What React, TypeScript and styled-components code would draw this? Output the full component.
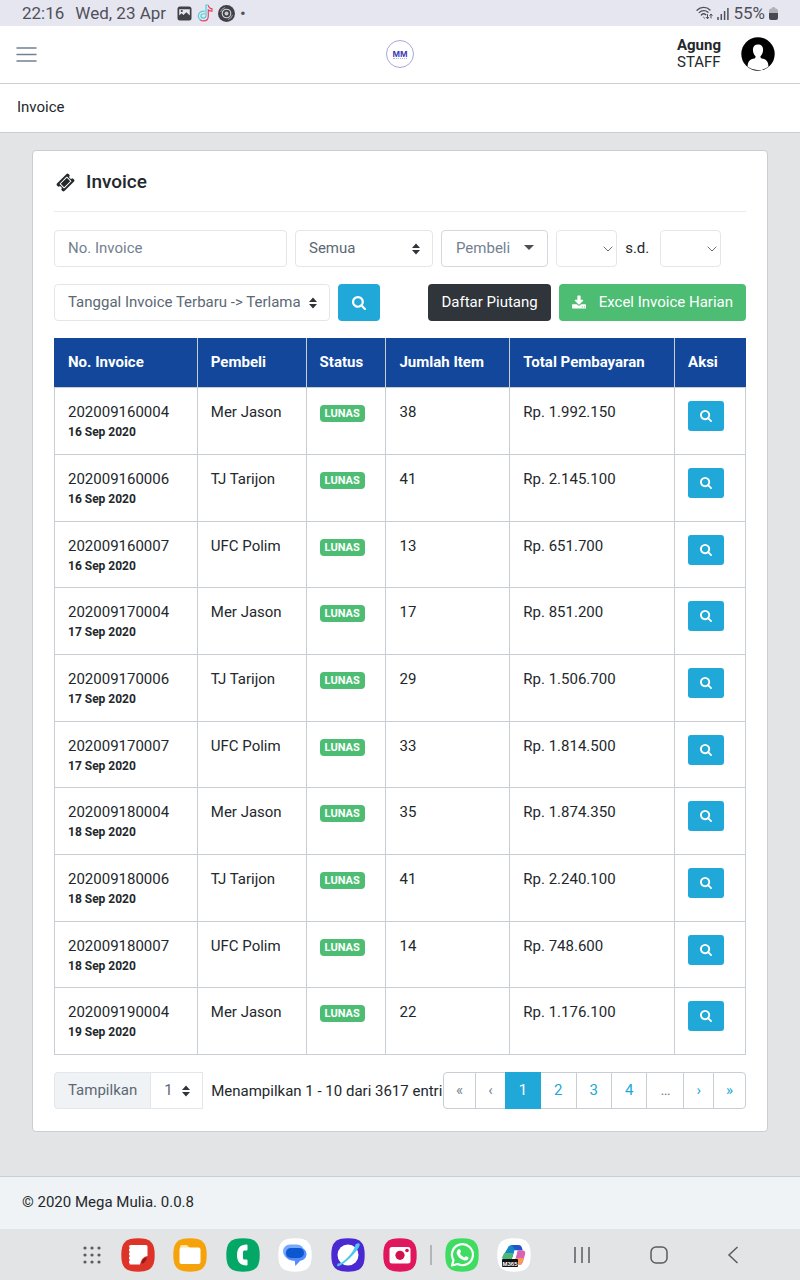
import React from "react";
import styled, { createGlobalStyle } from "styled-components";

const GlobalStyle = createGlobalStyle`
  *, *::before, *::after { box-sizing: border-box; }
  body {
    margin: 0;
    background: #e3e4e6;
    color: #23282c;
    font-family: Roboto, "Liberation Sans", sans-serif;
    font-size: 15px;
    line-height: 22px;
  }
  button, input, select { font: inherit; margin: 0; }
  a { text-decoration: none; }
`;

/* ---------- layout ---------- */

const Page = styled.div`
  display: flex;
  flex-direction: column;
  min-height: 100vh;
`;

const StatusBar = styled.div`
  display: flex;
  align-items: center;
  justify-content: space-between;
  height: 26px;
  padding: 0 22px;
  background: #e6e6f1;
  color: #505058;
  font-size: 17px;
`;

const StatusGroup = styled.div<{ $gap: number }>`
  display: flex;
  align-items: center;
  gap: ${(p) => p.$gap}px;
`;

const Navbar = styled.header`
  display: grid;
  grid-template-columns: 1fr auto 1fr;
  align-items: center;
  height: 58px;
  padding: 0 25px 1px 16px;
  background: #fff;
  border-bottom: 1px solid #c8ced3;
`;

const MenuButton = styled.button`
  display: flex;
  justify-self: start;
  padding: 0;
  border: 0;
  background: none;
  color: #73818f;
`;

const Logo = styled.a`
  display: flex;
  flex-direction: column;
  align-items: center;
  justify-content: center;
  width: 28px;
  height: 28px;
  margin-left: 9px;
  border: 1px solid #a9a5dc;
  border-radius: 50%;
  color: #3a35b5;
  font: bold 9px/8px "Liberation Sans", sans-serif;

  &::after {
    content: "";
    width: 14px;
    border-top: 1px dotted #b5b2e2;
  }
`;

const User = styled.div`
  display: flex;
  align-items: center;
  justify-self: end;
  gap: 20px;
  line-height: 17px;
`;

const UserText = styled.div`
  display: flex;
  flex-direction: column;
`;

const Breadcrumb = styled.nav`
  display: flex;
  align-items: center;
  height: 49px;
  padding: 0 17px 2px;
  background: #fff;
  border-bottom: 1px solid #c8ced3;
`;

const Main = styled.main`
  flex: 1;
  padding: 17px 32px 44px;
`;

const Card = styled.section`
  padding: 19px 21px 22px;
  background: #fff;
  border: 1px solid #c8ced3;
  border-radius: 4px;
`;

const CardTitle = styled.h1`
  display: flex;
  align-items: center;
  gap: 11px;
  margin: 0 0 18px;
  padding: 0 2px 17px;
  border-bottom: 1px solid #e9ebed;
  font-size: 19px;
  font-weight: 500;
  line-height: 24px;
`;

const Toolbar = styled.div`
  display: flex;
  flex-wrap: wrap;
  align-items: center;
  gap: 8px;
  margin-bottom: 17px;
`;

const ToolbarEnd = styled.div`
  display: flex;
  gap: 8px;
  margin-left: auto;
`;

const RangeLabel = styled.span`
  padding: 0 3px 2px 0;
`;

/* ---------- controls ---------- */

const TextInput = styled.input`
  flex: 0 1 233px;
  min-width: 120px;
  height: 37px;
  padding: 0 13px 2px;
  border: 1px solid #e4e7ea;
  border-radius: 4px;
  background: #fff;
  color: #5c6873;
  &::placeholder { color: #73818f; opacity: 1; }
`;

const SelectWrap = styled.span<{ $width: number }>`
  position: relative;
  display: inline-flex;
  flex-shrink: 0;
  width: ${(p) => p.$width}px;
`;

const SelectBox = styled.select<{ $joined?: boolean }>`
  appearance: none;
  width: 100%;
  height: 37px;
  padding: 0 13px 2px;
  border: 1px solid #e4e7ea;
  border-radius: ${(p) => (p.$joined ? "0" : "4px")};
  background: #fff;
  color: #5c6873;
`;

const SelectMark = styled.span<{ $right: number }>`
  position: absolute;
  top: 0;
  right: ${(p) => p.$right}px;
  display: flex;
  align-items: center;
  height: 100%;
  color: #2f353a;
  pointer-events: none;
`;

const Button = styled.button<{ $tone: "info" | "dark" | "success" }>`
  display: inline-flex;
  align-items: center;
  justify-content: center;
  gap: 13px;
  height: 37px;
  padding: 0 13px 2px;
  border: 0;
  border-radius: 4px;
  color: #fff;
  white-space: nowrap;
  background: ${(p) => ({ info: "#20a8d8", dark: "#2f353a", success: "#4dbd74" })[p.$tone]};
`;

const SearchButton = styled(Button)`
  width: 42px;
  padding: 0;
`;

const SmallButton = styled(Button)`
  width: 36px;
  height: 30px;
  padding: 0;
  border-radius: 3px;
`;

const DropButton = styled.button`
  display: inline-flex;
  align-items: center;
  gap: 14px;
  height: 37px;
  padding: 0 13px 2px 14px;
  border: 1px solid #d5d9dd;
  border-radius: 4px;
  background: #fff;
  color: #73818f;
`;

/* ---------- table ---------- */

const Table = styled.table`
  width: 100%;
  border-collapse: collapse;
  margin-bottom: 17px;
`;

const Col = styled.col<{ $width: number }>`
  width: ${(p) => p.$width}px;
`;

const HeadCell = styled.th`
  height: 49px;
  padding: 0 13px 2px;
  background: #12479b;
  border: 1px solid #c8ced3;
  border-top-color: #12479b;
  color: #fff;
  font-weight: 700;
  text-align: left;
  white-space: nowrap;
  &:first-child { border-left-color: #12479b; }
  &:last-child { border-right-color: #12479b; }
`;

/* Three rows add up to 200px. */
const BodyRow = styled.tr`
  height: 67px;
  &:nth-child(3n) { height: 66px; }
`;

const Cell = styled.td`
  padding: 13px 13px 0;
  border: 1px solid #c8ced3;
  vertical-align: top;
  white-space: nowrap;
`;

const InvoiceDate = styled.strong`
  display: block;
  font-size: 12px;
  line-height: 18px;
`;

const Badge = styled.span`
  display: inline-block;
  padding: 0 5px;
  border-radius: 4px;
  background: #4dbd74;
  color: #fff;
  font-size: 11px;
  font-weight: 700;
  line-height: 17px;
`;

/* ---------- table footer ---------- */

const TableFooter = styled.div`
  display: flex;
  align-items: center;
`;

const PageSizeLabel = styled.label`
  height: 37px;
  padding: 0 13px;
  border: 1px solid #e4e7ea;
  border-right: 0;
  border-radius: 4px 0 0 4px;
  background: #f0f3f5;
  color: #5c6873;
  line-height: 35px;
`;

const Summary = styled.span`
  margin-left: 8px;
  white-space: nowrap;
`;

const Pages = styled.ul`
  display: flex;
  margin: 0 0 0 auto;
  padding: 0;
  list-style: none;
`;

const PageItem = styled.li`
  & + & { margin-left: -1px; }
  &:first-child > a { border-radius: 4px 0 0 4px; }
  &:last-child > a { border-radius: 0 4px 4px 0; }
`;

const PageLink = styled.a<{ $state?: "active" | "muted"; $arrow: boolean }>`
  position: relative;
  z-index: ${(p) => (p.$state === "active" ? 1 : 0)};
  display: block;
  height: 37px;
  padding: 0 ${(p) => (p.$arrow ? 12 : 13)}px;
  border: 1px solid ${(p) => (p.$state === "active" ? "#20a8d8" : "#c8ced3")};
  background: ${(p) => (p.$state === "active" ? "#20a8d8" : "#fff")};
  color: ${(p) => (p.$state === "active" ? "#fff" : p.$state === "muted" ? "#73818f" : "#20a8d8")};
  line-height: 35px;
`;

const PageFooter = styled.footer`
  height: 53px;
  padding: 0 22px;
  background: #f0f3f5;
  border-top: 1px solid #c8ced3;
  line-height: 51px;
`;

/* ---------- device task bar ---------- */

const TaskBar = styled.div`
  display: flex;
  align-items: center;
  height: 51px;
  padding: 0 61px 0 83px;
  background: #e3e4e6;
`;

const AppRow = styled.div<{ $basis: number; $left: number }>`
  display: flex;
  flex: 0 0 ${(p) => p.$basis}px;
  justify-content: space-between;
  margin-left: ${(p) => p.$left}px;
`;

const TaskDivider = styled.div`
  width: 2px;
  height: 20px;
  margin-left: 13px;
  background: #b4b5b9;
`;

const NavKeys = styled.div`
  display: flex;
  flex: 1;
  justify-content: space-between;
  margin-left: 42px;
`;

const BareButton = styled.button`
  display: flex;
  padding: 0;
  border: 0;
  background: none;
`;

/* ---------- icons ---------- */

const SearchIcon = ({ size }: { size: number }) => (
  <svg width={size} height={size} viewBox="0 0 1664 1664" fill="currentColor" aria-hidden="true">
    <path d="M1152 704q0-185-131.500-316.500T704 256 387.500 387.500 256 704t131.500 316.500T704 1152t316.500-131.500T1152 704zm512 832q0 52-38 90t-90 38q-54 0-90-38l-343-342q-179 124-399 124-143 0-273.500-55.500t-225-150-150-225T0 704t55.500-273.500 150-225 225-150T704 0t273.500 55.500 225 150 150 225T1408 704q0 220-124 399l343 343q37 37 37 90z" />
  </svg>
);

const DownloadIcon = () => (
  <svg width="14" height="14" viewBox="0 0 1664 1536" fill="currentColor" aria-hidden="true">
    <path d="M1280 1344q0-26-19-45t-45-19-45 19-19 45 19 45 45 19 45-19 19-45zm256 0q0-26-19-45t-45-19-45 19-19 45 19 45 45 19 45-19 19-45zm128-224v320q0 40-28 68t-68 28H96q-40 0-68-28t-28-68v-320q0-40 28-68t68-28h465l135 136q58 56 136 56t136-56l136-136h464q40 0 68 28t28 68zm-325-569q17 41-14 70l-448 448q-18 19-45 19t-45-19L339 621q-31-29-14-70 17-39 59-39h256V64q0-26 19-45t45-19h256q26 0 45 19t19 45v448h256q42 0 59 39z" />
  </svg>
);

const TicketIcon = () => (
  <svg width="19" height="19" viewBox="0 0 1792 1792" fill="currentColor" aria-hidden="true">
    <path d="M1024 452l316 316-572 572-316-316zm-211 979l618-618q19-19 19-45t-19-45l-362-362q-18-18-45-18t-45 18l-618 618q-19 19-19 45t19 45l362 362q18 18 45 18t45-18zm889-637l-907 908q-37 37-90.500 37t-90.500-37l-126-126q56-56 56-136t-56-136-136-56-136 56l-125-126q-37-37-37-90.500t37-90.500l907-906q37-37 90.500-37t90.500 37l125 125q-56 56-56 136t56 136 136 56 136-56l126 125q37 37 37 90.500t-37 90.500z" />
  </svg>
);

const SortMark = () => (
  <svg width="8" height="12" viewBox="0 0 8 12" fill="currentColor" aria-hidden="true">
    <path d="M4 0.500L8 5H0zM4 11.500L0 7h8z" />
  </svg>
);

const ChevronMark = () => (
  <svg width="10" height="6" viewBox="0 0 10 6" fill="none" stroke="#6b7075" aria-hidden="true">
    <path d="M0.700 0.700L5 5l4.300-4.300" />
  </svg>
);

const CaretMark = () => (
  <svg width="10" height="5" viewBox="0 0 10 5" fill="#4a5056" aria-hidden="true">
    <path d="M0 0h10L5 5z" />
  </svg>
);

const MenuIcon = () => (
  <svg width="21" height="17" viewBox="0 0 21 17" fill="none" stroke="currentColor" strokeWidth="1.500" strokeLinecap="round">
    <path d="M1 2h19M1 8.500h19M1 15h19" />
  </svg>
);

const Avatar = () => (
  <svg width="34" height="34" viewBox="0 0 34 34" role="img" aria-label="Agung">
    <circle cx="17" cy="17" r="16.700" fill="#000" />
    <path
      fill="#fff"
      d="M17 7.500c3.200 0 5.200 2 5.100 5.300-.1 2.700-1 5-2.600 6.500-.2 1 .2 1.900 1.200 2.200 3.300.6 5.600 2 6.300 4.700.4 1.300.4 2.600.4 3.600A16 16 0 0 1 17 33a16 16 0 0 1-10.400-3.200c0-1 0-2.300.4-3.600.7-2.700 3-4.100 6.300-4.700 1-.3 1.400-1.200 1.200-2.200-1.600-1.500-2.500-3.800-2.600-6.500-.1-3.300 1.900-5.300 5.100-5.300z"
    />
  </svg>
);

const GalleryIcon = () => (
  <svg width="15" height="15" viewBox="0 0 15 15">
    <rect x="0.500" y="0.500" width="14" height="14" rx="2.500" fill="#414147" />
    <path d="M2.200 5.500v-2.300h10.600v6.200L9.300 6.200 6.500 9 4.500 7.300 2.200 9.600z" fill="#e6e6f1" />
    <circle cx="4.800" cy="5" r="1.100" fill="#414147" />
  </svg>
);

const NoteIcon = () => (
  <svg width="16" height="18" viewBox="0 0 16 18" fill="none" strokeWidth="1.200" strokeLinecap="round">
    <path d="M11.300 1.500c.4 2 1.700 3.100 3.700 3.300v2.400c-1.500 0-2.700-.4-3.700-1.200v6c0 3.200-2.200 4.900-4.800 4.900-1.300 0-2.300-.4-3.100-1" stroke="#e8405f" />
    <path d="M7.300 7.100C3.800 6.900 1.300 9 1.300 12c0 1.500.6 2.700 1.700 3.600M9 11.800V1h2.200M7.300 9.800c-2-.3-3.300.8-3.300 2.200 0 2.600 4.500 3 5-.2" stroke="#4fcfd6" />
  </svg>
);

const DiscIcon = () => (
  <svg width="17" height="17" viewBox="0 0 17 17">
    <circle cx="8.500" cy="8.500" r="8.500" fill="#414147" />
    <circle cx="8.500" cy="8.500" r="4.300" fill="none" stroke="#d5d5dd" strokeWidth="1.100" />
    <circle cx="8.500" cy="8.500" r="2" fill="#c9c9d1" />
    <path d="M2.500 7A6.300 6.300 0 0 1 7 2.500M14.500 10A6.300 6.300 0 0 1 10 14.500" stroke="#9b9ba3" fill="none" />
  </svg>
);

const WifiIcon = () => (
  <svg width="17" height="14" viewBox="0 0 17 14" fill="none" stroke="#505058" strokeWidth="1.300" strokeLinecap="round">
    <path d="M1 4.200C4.600.5 10.500.3 14 4M3.200 6.600c2.500-2.500 6.300-2.600 8.800-.3M5.300 9c1.300-1.300 3.300-1.400 4.600-.3" />
    <path d="M7.600 11.300l1 1M11.500 8.500v4M10.200 11.300l1.300 1.500 1.200-1.500M15 12V8.300M13.900 9.400L15 8l1.200 1.400" strokeWidth="1" />
  </svg>
);

const SignalIcon = () => (
  <svg width="12" height="13" viewBox="0 0 12 13" stroke="#505058" strokeWidth="1.500">
    <path d="M1 13v-3M4.300 13V7M7.600 13V4M10.900 13V1" />
  </svg>
);

const BatteryIcon = () => (
  <svg width="9" height="13" viewBox="0 0 9 13">
    <path d="M2.500 1.500Q2.500 0 4.500 0t2 1.500Q9 1.500 9 4v3H0V4q0-2.500 2.500-2.500z" fill="#b1b1ba" />
    <path d="M0 6h9v5q0 2-2 2H2q-2 0-2-2z" fill="#48484f" />
  </svg>
);

const AppIcon = ({ label, fill, children }: { label: string; fill: string; children: React.ReactNode }) => (
  <BareButton aria-label={label}>
    <svg width="34" height="34" viewBox="0 0 34 34">
      <path d="M17 0.300C29.500.3 33.700 4.500 33.700 17S29.500 33.700 17 33.700.3 29.500.3 17 4.500.3 17 .3z" fill={fill} />
      {children}
    </svg>
  </BareButton>
);

const GridIcon = () => (
  <svg width="18" height="18" viewBox="0 0 18 18" fill="#5b5b61">
    {[2, 9, 16].map((y) => [2, 9, 16].map((x) => <circle key={`${x}-${y}`} cx={x} cy={y} r="1.600" />))}
  </svg>
);

/* ---------- data ---------- */

const buyers = ["Mer Jason", "TJ Tarijon", "UFC Polim"];

const invoices = [
  ["202009160004", "16 Sep 2020", 0, 38, "1.992.150"],
  ["202009160006", "16 Sep 2020", 1, 41, "2.145.100"],
  ["202009160007", "16 Sep 2020", 2, 13, "651.700"],
  ["202009170004", "17 Sep 2020", 0, 17, "851.200"],
  ["202009170006", "17 Sep 2020", 1, 29, "1.506.700"],
  ["202009170007", "17 Sep 2020", 2, 33, "1.814.500"],
  ["202009180004", "18 Sep 2020", 0, 35, "1.874.350"],
  ["202009180006", "18 Sep 2020", 1, 41, "2.240.100"],
  ["202009180007", "18 Sep 2020", 2, 14, "748.600"],
  ["202009190004", "19 Sep 2020", 0, 22, "1.176.100"],
] as const;

const columns = [
  { title: "No. Invoice", width: 143 },
  { title: "Pembeli", width: 109 },
  { title: "Status", width: 80 },
  { title: "Jumlah Item", width: 124 },
  { title: "Total Pembayaran", width: 165 },
  { title: "Aksi", width: 71 },
];

const pages: { text: string; state?: "active" | "muted" }[] = [
  { text: "«", state: "muted" },
  { text: "‹", state: "muted" },
  { text: "1", state: "active" },
  { text: "2" },
  { text: "3" },
  { text: "4" },
  { text: "…", state: "muted" },
  { text: "›" },
  { text: "»" },
];

type SelectProps = { label?: string; id?: string; width: number; option?: string; date?: boolean; joined?: boolean };

const Select = ({ label, id, width, option = "", date, joined }: SelectProps) => (
  <SelectWrap $width={width}>
    <SelectBox id={id} aria-label={label} $joined={joined}>
      <option>{option}</option>
    </SelectBox>
    <SelectMark $right={date ? 4 : 13}>{date ? <ChevronMark /> : <SortMark />}</SelectMark>
  </SelectWrap>
);

export default function App() {
  return (
    <Page>
      <GlobalStyle />
      <StatusBar>
        <StatusGroup $gap={11}>
          <span>22:16</span>
          <span>Wed, 23 Apr</span>
          <StatusGroup $gap={5}>
            <GalleryIcon />
            <NoteIcon />
            <DiscIcon />
            <span>•</span>
          </StatusGroup>
        </StatusGroup>
        <StatusGroup $gap={4}>
          <WifiIcon />
          <SignalIcon />
          <span>55%</span>
          <BatteryIcon />
        </StatusGroup>
      </StatusBar>

      <Navbar>
        <MenuButton aria-label="Menu">
          <MenuIcon />
        </MenuButton>
        <Logo href="#">MM</Logo>
        <User>
          <UserText>
            <strong>Agung</strong>
            <span>STAFF</span>
          </UserText>
          <Avatar />
        </User>
      </Navbar>
      <Breadcrumb>Invoice</Breadcrumb>

      <Main>
        <Card>
          <CardTitle>
            <TicketIcon />
            Invoice
          </CardTitle>

          <Toolbar>
            <TextInput aria-label="No. Invoice" placeholder="No. Invoice" />
            <Select label="Status" width={138} option="Semua" />
            <DropButton>
              Pembeli
              <CaretMark />
            </DropButton>
            <Select label="Dari tanggal" width={61} date />
            <RangeLabel>s.d.</RangeLabel>
            <Select label="Sampai tanggal" width={61} date />
          </Toolbar>
          <Toolbar>
            <Select label="Urutan" width={276} option="Tanggal Invoice Terbaru -> Terlama" />
            <SearchButton $tone="info" aria-label="Cari">
              <SearchIcon size={14} />
            </SearchButton>
            <ToolbarEnd>
              <Button $tone="dark">Daftar Piutang</Button>
              <Button $tone="success">
                <DownloadIcon />
                Excel Invoice Harian
              </Button>
            </ToolbarEnd>
          </Toolbar>

          <Table>
            <colgroup>
              {columns.map((c) => (
                <Col key={c.title} $width={c.width} />
              ))}
            </colgroup>
            <thead>
              <tr>
                {columns.map((c) => (
                  <HeadCell key={c.title} scope="col">
                    {c.title}
                  </HeadCell>
                ))}
              </tr>
            </thead>
            <tbody>
              {invoices.map(([no, date, buyer, items, total]) => (
                <BodyRow key={no}>
                  <Cell>
                    {no}
                    <InvoiceDate>{date}</InvoiceDate>
                  </Cell>
                  <Cell>{buyers[buyer]}</Cell>
                  <Cell>
                    <Badge>LUNAS</Badge>
                  </Cell>
                  <Cell>{items}</Cell>
                  <Cell>Rp. {total}</Cell>
                  <Cell>
                    <SmallButton $tone="info" aria-label={`Lihat ${no}`}>
                      <SearchIcon size={12} />
                    </SmallButton>
                  </Cell>
                </BodyRow>
              ))}
            </tbody>
          </Table>

          <TableFooter>
            <PageSizeLabel htmlFor="page-size">Tampilkan</PageSizeLabel>
            <Select id="page-size" width={53} option="1" joined />
            <Summary>Menampilkan 1 - 10 dari 3617 entri</Summary>
            <Pages>
              {pages.map((p) => (
                <PageItem key={p.text}>
                  <PageLink href="#" $state={p.state} $arrow={"«‹›»".includes(p.text)}>
                    {p.text}
                  </PageLink>
                </PageItem>
              ))}
            </Pages>
          </TableFooter>
        </Card>
      </Main>

      <PageFooter>© 2020 Mega Mulia. 0.0.8</PageFooter>

      <TaskBar>
        <BareButton aria-label="Apps">
          <GridIcon />
        </BareButton>
        <AppRow $basis={296} $left={20}>
          <AppIcon label="Notes" fill="#dd3328">
            <path d="M8 8.500Q8 7 9.500 7H25q1.500 0 1.500 1.500V18q-6 .5-7.500 8.500H9.500Q8 26.500 8 25z" fill="#fff" />
            <path d="M26 19.500c-.6 3-2.500 5.500-5.500 6.500.3-4 2-6.200 5.500-6.500z" fill="#8c1d16" />
            <path d="M7.500 9v17" stroke="#dd3328" strokeWidth="2" strokeDasharray="2 2" />
          </AppIcon>
          <AppIcon label="Files" fill="#f6a20a">
            <path d="M7 9q0-2 2-2h5l3 3H7z" fill="#ffe3a0" />
            <rect x="6.500" y="9.500" width="21" height="16.500" rx="2" fill="#fff" />
          </AppIcon>
          <AppIcon label="Phone" fill="#04a866">
            <path d="M21.500 7.200v4.300q0 .9-.9.900h-2.300q-1.300 0-1.300 1.500v6.200q0 1.500 1.300 1.500h2.300q.9 0 .9.900v4.300q0 .8-.9.800c-6.300-.2-9.600-3.600-9.600-10.600s3.300-10.400 9.600-10.600q.9 0 .9.800z" fill="#fff" />
          </AppIcon>
          <AppIcon label="Messages" fill="#fff">
            <rect x="5" y="6.500" width="21" height="14" rx="7" fill="#78a9ff" />
            <path d="M13 10h9c3.800 0 6.500 2.600 6.500 6 0 3.600-2.700 6.500-6.300 6.700L17.300 28l-.5-5.200c-4.500 0-8.500-1.800-9.300-5.300C6.800 13 9 10 13 10z" fill="#558bfa" />
            <rect x="8" y="10" width="18" height="10" rx="5" fill="#0b57d0" />
          </AppIcon>
          <AppIcon label="Internet" fill="#4a28d2">
            <circle cx="17" cy="17" r="10.500" fill="#fff" />
            <path d="M24.500 6.200c3-1.600 5-1 4 1.600C26.500 13.600 13 27 7.500 28.300c-2 .5-1.500-1.500-.5-3 1.500.5 4-.7 7.500-3.800 4.800-4.300 9.300-10.300 10-15.300z" fill="#4cc7ee" />
          </AppIcon>
          <AppIcon label="Camera" fill="#e0175c">
            <rect x="6.500" y="9" width="21" height="16.500" rx="2.500" fill="#fff" />
            <circle cx="17" cy="17.300" r="4.600" fill="#d3104f" />
            <circle cx="24" cy="12.500" r="1.800" fill="#d3104f" />
          </AppIcon>
        </AppRow>
        <TaskDivider />
        <AppRow $basis={86} $left={13}>
          <AppIcon label="WhatsApp" fill="#3fdc62">
            <path d="M7 27.500l1.500-5.300A10.500 10.500 0 1 1 12.600 26z" fill="none" stroke="#fff" strokeWidth="2.200" strokeLinejoin="round" />
            <path d="M13.600 11.200c.6-.4 1.300-.3 1.500.3l.9 2.100c.2.500-1.100 1.600-1 2 .9 1.800 2.300 3 4.100 3.800.5.200 1.400-1.400 1.900-1.200l2.300 1.100c.5.300.1 1.700-.5 2.300-1 1-2.500 1.200-4 .7-3.200-1.100-5.700-3.400-6.800-6.100-.8-1.900-.1-4 1.600-5z" fill="#fff" />
          </AppIcon>
          <AppIcon label="Copilot" fill="#fff">
            <path d="M11 9.500Q12 7 14.500 7H22q-3 .7-4 4l-3.200 10.500H6.500q-1.500-1-.8-3z" fill="#1686c8" />
            <path d="M7.200 15h9.400L14.500 22H7q-2-1-1.300-3.500z" fill="#4cb978" />
            <path d="M15 7h6.500q2.800 0 3.500 3l.8 2.500H18z" fill="#2255cc" />
            <path d="M20.500 12.500h5q3.500 0 2.500 4l-2 7q-1 3.500-4 3.500h-5z" fill="#dc62b5" />
            <path d="M18.500 20h8.300l-.9 3.500q-1 3.500-4 3.500h-5z" fill="#f59a5c" />
            <path d="M17.800 12.500h2.700L18 21h-2.700z" fill="#fff" />
            <rect x="5" y="21" width="16" height="8" rx="1" fill="#111" />
            <text x="13" y="27.500" fill="#fff" fontSize="6" fontWeight="700" textAnchor="middle" fontFamily="Liberation Sans, sans-serif">
              M365
            </text>
          </AppIcon>
        </AppRow>
        <NavKeys>
          <BareButton aria-label="Recents">
            <svg width="18" height="18" viewBox="0 0 18 18" stroke="#5b5b61" strokeWidth="1.500">
              <path d="M2 1v16M9 1v16M16 1v16" />
            </svg>
          </BareButton>
          <BareButton aria-label="Home">
            <svg width="18" height="18" viewBox="0 0 18 18" fill="none" stroke="#5b5b61" strokeWidth="1.500">
              <rect x="1" y="1" width="16" height="16" rx="5" />
            </svg>
          </BareButton>
          <BareButton aria-label="Back">
            <svg width="12" height="18" viewBox="0 0 12 18" fill="none" stroke="#5b5b61" strokeWidth="1.500">
              <path d="M10.500 1L2 9l8.500 8" />
            </svg>
          </BareButton>
        </NavKeys>
      </TaskBar>
    </Page>
  );
}
